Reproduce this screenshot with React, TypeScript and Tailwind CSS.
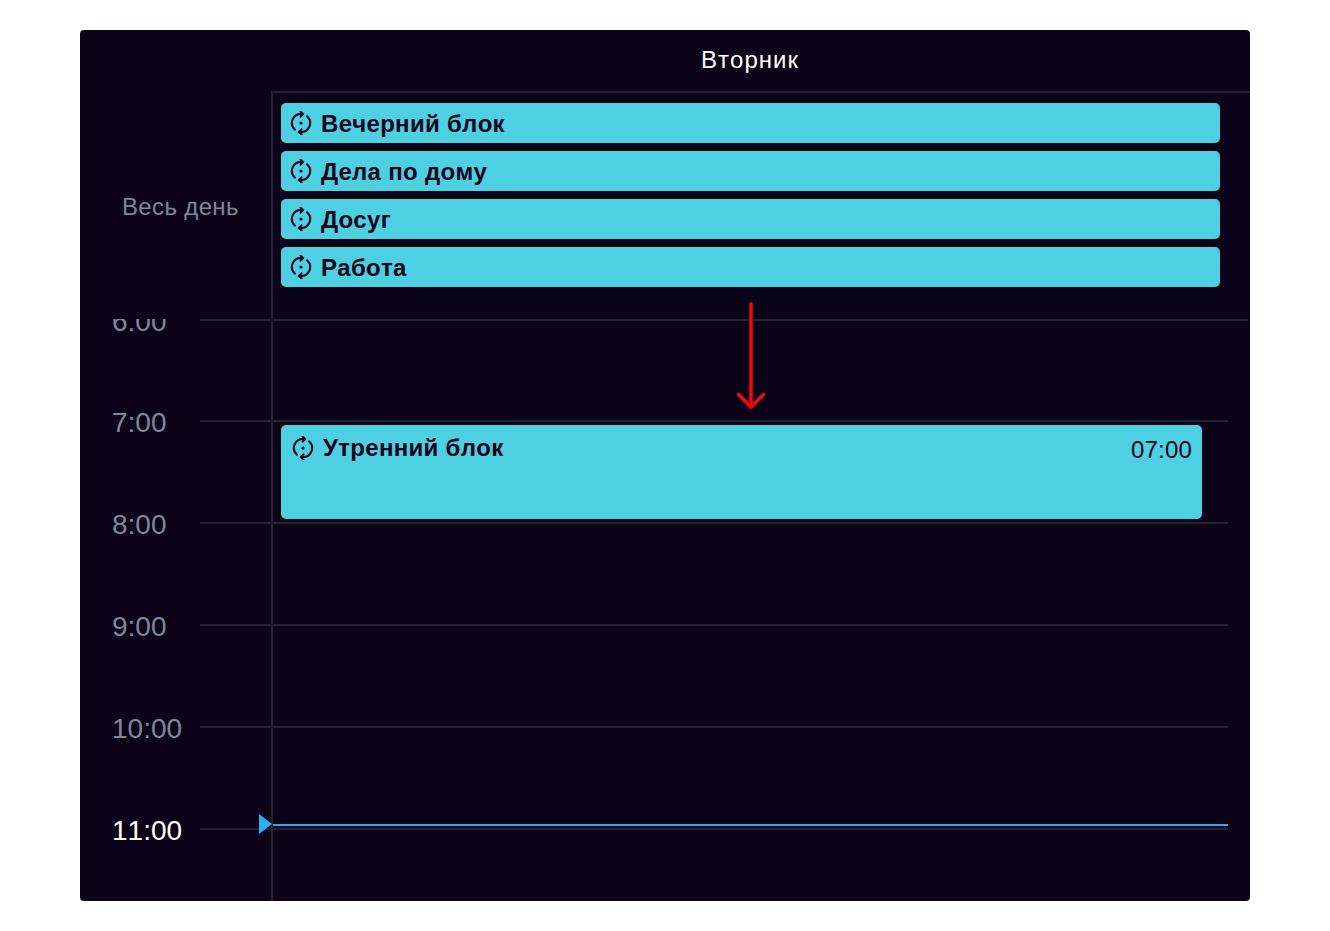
import React from "react";

const RepeatIcon = () => (
  <svg width="24" height="24" viewBox="0 0 24 24" fill="none" stroke="#0b0318" strokeWidth="2" strokeLinecap="round" strokeLinejoin="round" className="shrink-0">
    <path d="M13 3A9 9 0 0 0 6 18.7" />
    <path d="M11 21A9 9 0 0 0 18 5.3" />
    <path d="M11.5 0.6 14.2 3 11.5 5.6" />
    <path d="M12.5 23.4 9.8 21 12.5 18.4" />
    <circle cx="12" cy="12" r="1.6" fill="#0b0318" stroke="none" />
  </svg>
);

const allDay = ["Вечерний блок", "Дела по дому", "Досуг", "Работа"];
const hours = ["6:00", "7:00", "8:00", "9:00", "10:00", "11:00"];

const App = () => {
  return (
    <div className="bg-white w-[1330px] h-[931px] pt-[30px] pl-[80px] font-['Liberation_Sans',Arial,sans-serif] [font-kerning:none]">
      <div className="relative w-[1170px] h-[871px] bg-[#0b0318] rounded-[4px] overflow-hidden flex flex-col">
        <div className="h-[61px] shrink-0 flex pl-[192px] pr-[22px]">
          <div className="flex-1 pt-[14px] text-center text-white text-[24px] leading-[32px] tracking-[1px]">Вторник</div>
        </div>

        <div className="h-[228px] shrink-0 flex">
          <div className="w-[191px] shrink-0 pl-[42px] pt-[100px] text-[24px] leading-[32px] tracking-[0.35px] text-[#7f8699]">Весь день</div>
          <div className="flex-1 border-l-2 border-t-2 border-[#262032] pl-[8px] pr-[30px] pt-[10px] flex flex-col gap-2">
            {allDay.map((title) => (
              <div key={title} className="h-10 bg-[#4dd0e2] rounded-[5px] flex items-center pl-[8px] gap-2 text-[#0b0318] font-bold text-[24px]">
                <RepeatIcon />
                <span className="tracking-[0.3px] pt-[2px]">{title}</span>
              </div>
            ))}
          </div>
        </div>

        <div className="flex-1 overflow-hidden">
          {hours.map((h, i) => (
            <div key={h} className={i === 0 ? "flex h-[101px]" : "flex h-[102px]"}>
              <div className={i === 5 ? "w-[120px] shrink-0 pl-[32px] -mt-[13px] text-[28px] leading-[32px] text-white" : "w-[120px] shrink-0 pl-[32px] -mt-[13px] text-[28px] leading-[32px] text-[#7f8699]"}>
                {h}
              </div>
              <div className="w-[71px] shrink-0 border-t-2 border-[#262032]" />
              <div className={i === 0 ? "relative flex-1 border-l-2 border-t-2 border-[#262032] mr-[2px]" : "relative flex-1 border-l-2 border-t-2 border-[#262032] mr-[22px]"}>
                {h === "7:00" && (
                  <div className="absolute left-[8px] top-[3px] w-[921px] h-[94px] bg-[#4dd0e2] rounded-[5px] flex items-start justify-between pl-[10px] pr-[10px] pt-[10px] text-[#0b0318]">
                    <div className="flex items-center gap-2 font-bold text-[24px] leading-[24px]">
                      <RepeatIcon />
                      <span className="tracking-[0.3px] pt-[1px]">Утренний блок</span>
                    </div>
                    <span className="mt-[1px] text-[24px] leading-[28px] tracking-[0.2px]">07:00</span>
                  </div>
                )}
                {h === "11:00" && (
                  <>
                    <div className="absolute left-0 right-0 -top-[6px] h-[2px] bg-[#2ba8ef]" />
                    <div className="absolute -left-[14px] -top-[16px] w-[13px] h-[20px] bg-[#2bb0f5] [clip-path:polygon(0_0,100%_50%,0_100%)]" />
                  </>
                )}
              </div>
            </div>
          ))}
        </div>

        <svg className="absolute left-[650px] top-[270px]" width="40" height="112" viewBox="0 0 40 112" fill="none" stroke="#f40808" strokeWidth="3.5" strokeLinecap="round" strokeLinejoin="round">
          <path d="M21 4V107" />
          <path d="M8.5 94.5 21 107 33.5 94.5" />
        </svg>
      </div>
    </div>
  );
};

export default App;
